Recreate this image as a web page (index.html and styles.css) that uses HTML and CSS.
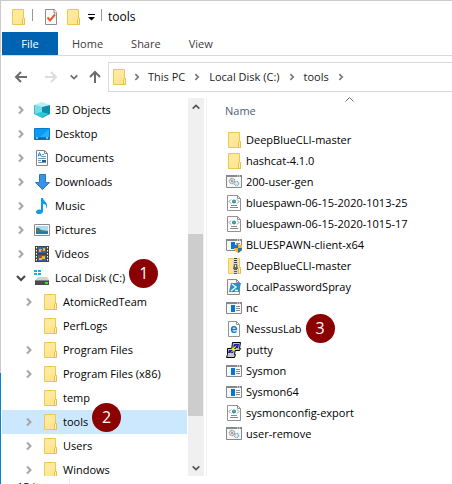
FILE: index.html
```html
<!DOCTYPE html>
<html lang="en">
<head>
<meta charset="utf-8">
<title>tools</title>
<link rel="stylesheet" href="styles.css">
</head>
<body>
<svg class="sprites" aria-hidden="true">
  <symbol id="folder" viewBox="0 0 16 16">
    <path d="M2.5.5h11v9h1v6h-12z" fill="#ffe693" stroke="#edc850"/>
    <path d="M3 1h10v5L3 12z" fill="#ffeba6" opacity=".6"/>
    <path d="M12.5 15.500v-5q0-1 1-1h1v6z" fill="#fff0b8" stroke="#e9c044"/>
  </symbol>
  <symbol id="properties" viewBox="0 0 16 16">
    <path d="M2.500.5h9l2 3v12h-11z" fill="#fafafa" stroke="#8d8d8d"/>
    <path d="M11 .5v3.500h3" fill="#fff" stroke="#8d8d8d"/>
    <path d="M4.500 8.500l2.500 3 5-6" fill="none" stroke="#ea5b25" stroke-width="2"/>
  </symbol>
  <symbol id="chevron" viewBox="0 0 12 12"><path d="M4 2.500L7.500 6 4 9.500" fill="none" stroke="currentColor" stroke-width="2"/></symbol>
  <symbol id="chevron-down" viewBox="0 0 12 12"><path d="M2 4l4 4 4-4" fill="none" stroke="currentColor" stroke-width="2"/></symbol>
  <symbol id="menu-down" viewBox="0 0 8 8"><path d="M1 1h7v1H1zM1 4h7L4.500 7.500z"/></symbol>
  <symbol id="arrow-left" viewBox="0 0 14 14"><path d="M13 7H2M7 2L2 7l5 5" fill="none" stroke="currentColor" stroke-width="2"/></symbol>
  <symbol id="arrow-up" viewBox="0 0 14 14"><path d="M7 13V2M2 7l5-5 5 5" fill="none" stroke="currentColor" stroke-width="2"/></symbol>
  <symbol id="cube" viewBox="0 0 16 16">
    <path d="M0 3l8-3 8 3-8 2z" fill="#b7eef5"/>
    <path d="M0 3l8 2v11l-8-4z" fill="#3cbccd"/>
    <path d="M16 3L8 5v11l8-4z" fill="#0c8ea8"/>
    <path d="M1 3l7 2v5l-7 2z" fill="#76dce6"/>
    <path d="M8 10l7 2-7 3-7-3z" fill="#29c8dc"/>
  </symbol>
  <symbol id="desktop" viewBox="0 0 16 16">
    <path d="M.5 2.500h15v11H.5z" fill="#0b9bf3" stroke="#087acb"/>
    <path d="M15 3v8L6 11z" fill="#27adff"/>
    <path d="M1 11.500h14V13H1z" fill="#0566ad"/><path d="M2 12h2m8 0h2" stroke="#fff"/>
  </symbol>
  <symbol id="document" viewBox="0 0 16 16">
    <path d="M2.500.5h8l3 3v12h-11z" fill="#fff" stroke="#858585"/>
    <path d="M10.500.5v3h3" fill="none" stroke="#858585"/>
    <path d="M4 6.500l1.500-4 2 4M4 5h3" fill="none" stroke="#2a86ca"/>
    <path d="M8 4.500h2M8 6.500h4M4 8.500h8M4 10.500h3M4 12.500h8" stroke="#6499c1"/>
    <path d="M8 10h4v2H8z" fill="#265c86"/>
  </symbol>
  <symbol id="download" viewBox="0 0 16 16"><path d="M5.500.5h6v8h4L8.500 15.500l-7-7h4z" fill="#3994e6" stroke="#2678c6"/></symbol>
  <symbol id="music" viewBox="0 0 16 16">
    <path d="M7 0h2c0 3 5 4 4 9-.5 1-1 2-1 1 1-3-1-4-3-4v7c0 4-7 4-7 1 0-2 3-3 5-2z" fill="#079cf3"/>
  </symbol>
  <symbol id="picture" viewBox="0 0 16 16">
    <path d="M.5 2.500h15v11H.5z" fill="#fff" stroke="#8b8b8b"/>
    <path d="M2 4h12v8H2z" fill="#a9dcf5"/>
    <path d="M2 6q3-1 5 2l7 1v3H2z" fill="#477d6a"/><path d="M2 10h12v2H2z" fill="#2778ad"/>
  </symbol>
  <symbol id="video" viewBox="0 0 16 16">
    <path d="M1 0h14v16H1z" fill="#444"/>
    <path d="M2.500 1v14M13.500 1v14" stroke="#fff" stroke-dasharray="1.500 1.500"/>
    <path d="M4 1h8v6H4zM4 9h8v6H4z" fill="#3467b0"/>
    <path d="M5 3h3v3H5zM9 2h2v3H9zM5 12h3v2H5zM8 10h3v3H8z" fill="#e8b735"/>
    <path d="M7 4h2v2H7zM6 10h2v2H6z" fill="#b7442f"/>
  </symbol>
  <symbol id="disk" viewBox="0 0 16 16">
    <path d="M0 0h3v2H0zM4 0h3v2H4zM0 3h3v2H0zM4 3h3v2H4z" fill="#0bb4ee"/>
    <path d="M4 7h9l2 3H1z" fill="#d2d2d2"/>
    <path d="M1 10h14v5H1z" fill="#4a4a4a"/><path d="M1 10.500h14" stroke="#858585"/>
    <path d="M11 12h3v2h-3z" fill="#31df4c"/>
  </symbol>
  <symbol id="script" viewBox="0 0 16 16">
    <path d="M.5 1.500h15v12H.5z" fill="#f7f7f7" stroke="#85898c"/><path d="M0 1h16v2H0z" fill="#85898c"/>
    <path d="M11 2h1m1 0h1" stroke="#fff"/>
    <circle cx="6" cy="7" r="2.500" fill="#eee" stroke="#9a9a9a" stroke-width="1.500" stroke-dasharray="1 .5"/><circle cx="6" cy="7" r="1" fill="#888"/>
    <circle cx="10.500" cy="9.500" r="2" fill="#eef8ff" stroke="#83acc7" stroke-width="1.500" stroke-dasharray="1 .5"/>
  </symbol>
  <symbol id="xml" viewBox="0 0 16 16">
    <path d="M1.500.5h10l3 3v12h-13z" fill="#fff" stroke="#929292"/><path d="M11.500.5v3h3" fill="none" stroke="#929292"/>
    <circle cx="8" cy="6.500" r="2" fill="#2389b4"/><path d="M7 5l2 1-1 2z" fill="#6ac36f"/>
    <path d="M5 4.500l-2 2 2 2M11 4.500l2 2-2 2" fill="none" stroke="#8796a3"/>
    <path d="M5 10.500h6M4 12.500h8" stroke="#888"/>
  </symbol>
  <symbol id="app" viewBox="0 0 16 16">
    <path d="M.5 2.500h15v11H.5z" fill="#f8f8f8" stroke="#85898c"/><path d="M0 2h16v2H0z" fill="#85898c"/>
    <path d="M11 3h1m1 0h1" stroke="#fff"/><path d="M5 5h4v7H5z" fill="#0078d7"/>
    <path d="M10 6.500h4M10 8.500h4M10 10.500h4" stroke="#85898c"/>
  </symbol>
  <symbol id="shield" viewBox="0 0 16 16">
    <path d="M8 8q3 0 4-1 1 1 4 1v3q0 3-4 5-4-2-4-5z" fill="#f5b52c"/>
    <path d="M12 7v4H8V8q3 0 4-1zM12 11h4q0 3-4 5z" fill="#2471b8"/>
  </symbol>
  <symbol id="zip" viewBox="0 0 16 16">
    <path d="M2.5.5h11v9h1v6h-12z" fill="#ffe693" stroke="#edc850"/>
    <path d="M12.500 15.500v-5q0-1 1-1h1v6z" fill="#fff0b8" stroke="#e9c044"/>
    <path d="M7 0h5v16H7z" fill="#d8d8d0"/><path d="M9.500 0v6" stroke="#444" stroke-width="3" stroke-dasharray="1 1"/>
    <path d="M8 6h3l1 5H7z" fill="#666"/><path d="M9 7h1v2H9z" fill="#eee"/><path d="M9.500 11v5" stroke="#555" stroke-width="3" stroke-dasharray="1 1"/>
  </symbol>
  <symbol id="powershell" viewBox="0 0 16 16">
    <path d="M1.500.5h9l3 3v12h-12z" fill="#f6f6f6" stroke="#8b8b8b"/><path d="M10.500.5v3h3" fill="none" stroke="#8b8b8b"/>
    <path d="M5 4h10l-2 9H3z" fill="#2392c9"/><path d="M6 5l4 3-5 4M9 11.500h3" fill="none" stroke="#e9f8ff" stroke-width="1.500"/>
  </symbol>
  <symbol id="web" viewBox="0 0 16 16">
    <path d="M2.500.5h8l3 3v12h-11z" fill="#fff" stroke="#929292"/><path d="M10.500.5v3h3" fill="none" stroke="#929292"/>
    <path d="M5.500 8.500h5c0-4-5-3.500-5 0 0 3 3 3.500 5 2" fill="none" stroke="#0b7ed4" stroke-width="1.500"/>
  </symbol>
  <symbol id="putty" viewBox="0 0 16 16">
    <path d="M6.500.5h8l-1 6h1l-1 2h-8z" fill="#bdbdbd" stroke="#000"/><path d="M8 2h5l-1 4H7z" fill="#1820b5"/>
    <path d="M1.500 6.500h8l-1 6h1l-1 3h-8l1-3z" fill="#c8c8c8" stroke="#000"/><path d="M3 8h5l-1 3H2z" fill="#1820b5"/>
    <path d="M11 3L5 7h3L4 11l7-4H8z" fill="#ff0"/>
  </symbol>
</svg>
<div class="window">
  <header class="titlebar">
    <svg class="icon"><use href="#folder"/></svg>
    <i class="divider"></i>
    <button class="tool first" aria-label="Properties"><svg class="icon"><use href="#properties"/></svg></button>
    <button class="tool" aria-label="New folder"><svg class="icon"><use href="#folder"/></svg></button>
    <button class="tool" aria-label="Customize"><svg class="small"><use href="#menu-down"/></svg></button>
    <i class="divider"></i>
    <h1>tools</h1>
  </header>
  <div class="tabs">
    <button class="tab file">File</button><button class="tab">Home</button><button class="tab">Share</button><button class="tab">View</button>
  </div>
  <div class="address">
    <div class="history">
      <button aria-label="Back"><svg class="arrow"><use href="#arrow-left"/></svg></button>
      <button class="off" aria-label="Forward" disabled><svg class="arrow forward"><use href="#arrow-left"/></svg></button>
      <button class="recent" aria-label="Recent locations"><svg class="tiny"><use href="#chevron-down"/></svg></button>
      <button aria-label="Up"><svg class="arrow"><use href="#arrow-up"/></svg></button>
    </div>
    <nav class="path" aria-label="Path">
      <svg class="icon"><use href="#folder"/></svg>
      <svg class="sep"><use href="#chevron"/></svg>
      <a href="#">This PC</a><svg class="sep"><use href="#chevron"/></svg>
      <a href="#">Local Disk (C:)</a><svg class="sep"><use href="#chevron"/></svg>
      <a href="#">tools</a><svg class="sep"><use href="#chevron"/></svg>
    </nav>
  </div>
  <div class="content">
    <nav class="tree" aria-label="Folders">
      <div class="row"><button class="twist" aria-label="Expand"><svg><use href="#chevron"/></svg></button><svg class="icon"><use href="#cube"/></svg><a href="#">3D Objects</a></div>
      <div class="row"><button class="twist" aria-label="Expand"><svg><use href="#chevron"/></svg></button><svg class="icon"><use href="#desktop"/></svg><a href="#">Desktop</a></div>
      <div class="row"><button class="twist" aria-label="Expand"><svg><use href="#chevron"/></svg></button><svg class="icon"><use href="#document"/></svg><a href="#">Documents</a></div>
      <div class="row"><button class="twist" aria-label="Expand"><svg><use href="#chevron"/></svg></button><svg class="icon"><use href="#download"/></svg><a href="#">Downloads</a></div>
      <div class="row"><button class="twist" aria-label="Expand"><svg><use href="#chevron"/></svg></button><svg class="icon"><use href="#music"/></svg><a href="#">Music</a></div>
      <div class="row"><button class="twist" aria-label="Expand"><svg><use href="#chevron"/></svg></button><svg class="icon"><use href="#picture"/></svg><a href="#">Pictures</a></div>
      <div class="row"><button class="twist" aria-label="Expand"><svg><use href="#chevron"/></svg></button><svg class="icon"><use href="#video"/></svg><a href="#">Videos</a></div>
      <div class="row"><button class="twist open" aria-label="Collapse"><svg><use href="#chevron-down"/></svg></button><svg class="icon"><use href="#disk"/></svg><a href="#">Local Disk (C:)</a><span class="anchor"><b class="badge">1</b></span></div>
      <div class="row child"><button class="twist" aria-label="Expand"><svg><use href="#chevron"/></svg></button><svg class="icon"><use href="#folder"/></svg><a href="#">AtomicRedTeam</a></div>
      <div class="row child"><i class="twist"></i><svg class="icon"><use href="#folder"/></svg><a href="#">PerfLogs</a></div>
      <div class="row child"><button class="twist" aria-label="Expand"><svg><use href="#chevron"/></svg></button><svg class="icon"><use href="#folder"/></svg><a href="#">Program Files</a></div>
      <div class="row child"><button class="twist" aria-label="Expand"><svg><use href="#chevron"/></svg></button><svg class="icon"><use href="#folder"/></svg><a href="#">Program Files (x86)</a></div>
      <div class="row child"><i class="twist"></i><svg class="icon"><use href="#folder"/></svg><a href="#">temp</a></div>
      <div class="row child selected"><button class="twist" aria-label="Expand"><svg><use href="#chevron"/></svg></button><svg class="icon"><use href="#folder"/></svg><a href="#">tools</a><span class="anchor"><b class="badge">2</b></span></div>
      <div class="row child"><button class="twist" aria-label="Expand"><svg><use href="#chevron"/></svg></button><svg class="icon"><use href="#folder"/></svg><a href="#">Users</a></div>
      <div class="row child"><button class="twist" aria-label="Expand"><svg><use href="#chevron"/></svg></button><svg class="icon"><use href="#folder"/></svg><a href="#">Windows</a></div>
    </nav>
    <div class="scroll">
      <button aria-label="Scroll up"><svg class="tiny flip"><use href="#chevron-down"/></svg></button>
      <div class="track"><div class="thumb"></div></div>
      <button aria-label="Scroll down"><svg class="tiny"><use href="#chevron-down"/></svg></button>
    </div>
    <main class="files">
      <table>
        <thead><tr><th scope="col"><span class="heading">Name<svg class="sort" viewBox="0 0 9 5"><path d="M.5 4.500l4-4 4 4" fill="none" stroke="#6d6d6d"/></svg></span></th></tr></thead>
        <tbody>
          <tr><td><a href="#"><svg class="icon"><use href="#folder"/></svg>DeepBlueCLI-master</a></td></tr>
          <tr><td><a href="#"><svg class="icon"><use href="#folder"/></svg>hashcat-4.1.0</a></td></tr>
          <tr><td><a href="#"><svg class="icon"><use href="#script"/></svg>200-user-gen</a></td></tr>
          <tr><td><a href="#"><svg class="icon"><use href="#xml"/></svg>bluespawn-06-15-2020-1013-25</a></td></tr>
          <tr><td><a href="#"><svg class="icon"><use href="#xml"/></svg>bluespawn-06-15-2020-1015-17</a></td></tr>
          <tr><td><a href="#"><svg class="icon"><use href="#app"/><use href="#shield"/></svg>BLUESPAWN-client-x64</a></td></tr>
          <tr><td><a href="#"><svg class="icon"><use href="#zip"/></svg>DeepBlueCLI-master</a></td></tr>
          <tr><td><a href="#"><svg class="icon"><use href="#powershell"/></svg>LocalPasswordSpray</a></td></tr>
          <tr><td><a href="#"><svg class="icon"><use href="#app"/></svg>nc</a></td></tr>
          <tr><td><a href="#"><svg class="icon"><use href="#web"/></svg>NessusLab<span class="anchor"><b class="badge level">3</b></span></a></td></tr>
          <tr><td><a href="#"><svg class="icon"><use href="#putty"/></svg>putty</a></td></tr>
          <tr><td><a href="#"><svg class="icon"><use href="#app"/></svg>Sysmon</a></td></tr>
          <tr><td><a href="#"><svg class="icon"><use href="#app"/></svg>Sysmon64</a></td></tr>
          <tr><td><a href="#"><svg class="icon"><use href="#xml"/></svg>sysmonconfig-export</a></td></tr>
          <tr><td><a href="#"><svg class="icon"><use href="#script"/></svg>user-remove</a></td></tr>
        </tbody>
      </table>
    </main>
  </div>
  <footer class="status"><span>15 items</span></footer>
</div>
</body>
</html>
```
FILE: styles.css
```css
* { box-sizing: border-box; }
body {
  margin: 0;
  height: 100vh;
  overflow: hidden;
  padding: 1px 0 0 1px;
  background: linear-gradient(#cbcbcb 0 77%, #0787cc 77%);
  font: 11px/16px "Open Sans", "Noto Sans", sans-serif;
  color: #000;
}
a { color: inherit; text-decoration: none; white-space: nowrap; }
button { font: inherit; color: inherit; border: 0; padding: 0; background: none; }
svg { display: block; flex: none; }
.sprites { position: absolute; width: 0; height: 0; }
.icon { width: 16px; height: 16px; }
.small { width: 8px; height: 8px; }
.tiny { width: 10px; height: 10px; }

.window {
  display: flex;
  flex-direction: column;
  height: 100%;
  padding-left: 1px;
  background: #fff;
}

.titlebar { display: flex; align-items: center; flex: none; height: 31px; padding-left: 8px; }
.titlebar h1 { margin: 0; font-size: 12px; font-weight: 400; }
.divider { width: 1px; height: 12px; margin: 0 6px 3px 6px; background: #999; }
.tool + .tool { margin-left: 6px; }
.tool.first { margin-left: 4px; }

.tabs { display: flex; flex: none; height: 24px; border-bottom: 1px solid #dadada; color: #3b3b3b; }
.tab { padding: 0 14px; }
.tab.file { width: 56px; background: #0063b1; color: #fff; }

.address { display: flex; align-items: center; flex: none; height: 41px; color: #222; }
.history { display: flex; align-items: center; flex: none; width: 106px; padding-left: 12px; color: #6c6c6c; }
.history button + button { margin-left: 16px; }
.history .recent { margin-left: 11px; }
.history .recent + button { margin-left: 9px; }
.history .off { color: #dcdcdc; }
.arrow { width: 14px; height: 14px; }
.forward { transform: scaleX(-1); }
.path {
  display: flex;
  align-items: center;
  flex: 1;
  height: 30px;
  padding-left: 2px;
  border: solid #d9d9d9;
  border-width: 1px 0 1px 1px;
}
.sep { width: 10px; height: 10px; margin: 0 7px; color: #777; }
.icon + .sep { margin: 0 6px 0 5px; }

.content { display: flex; flex: 1; min-height: 0; padding-top: 1px; }
.tree { width: 185px; flex: none; overflow: hidden; }
.row { display: flex; align-items: center; height: 24px; padding-left: 13px; }
.child { padding-left: 21px; }
.row .icon { margin: 0 5px 0 7px; }
.twist { width: 12px; height: 12px; flex: none; color: #a6a6a6; }
.twist svg { width: 12px; height: 12px; }
.open { color: #444; }
.selected { background: #cce8ff; }

.scroll { display: flex; flex-direction: column; flex: none; width: 16px; margin: 0 2px 0 1px; background: #f0f0f0; color: #555; }
.scroll button { display: grid; place-items: center; height: 17px; }
.flip { transform: scaleY(-1); }
.track { display: flex; flex-direction: column; justify-content: flex-end; flex: 1; padding-bottom: 43px; }
.thumb { height: 64%; max-height: 182px; flex: none; margin-right: 1px; background: #cdcdcd; }

.files { flex: 1; min-width: 0; border-left: 1px solid #f2f2f2; }
table { width: 100%; border-collapse: collapse; }
th { height: 31px; padding: 0 0 5px 18px; font-weight: 400; text-align: left; color: #4c607a; }
.heading { display: block; position: relative; }
.sort { position: absolute; left: 53%; top: -6px; width: 9px; height: 5px; }
td { height: 21px; padding: 0 0 0 19px; }
td a { display: flex; align-items: center; }
td .icon { margin-right: 4px; }

/* Numbered step markers shown beside the item they refer to */
.anchor { position: relative; width: 0; height: 16px; margin-left: 4px; }
.badge {
  position: absolute;
  left: 0;
  top: -11px;
  width: 29px;
  height: 29px;
  border-radius: 50%;
  background: #8b0000;
  color: #fff;
  font: 16px/29px "Open Sans", sans-serif;
  text-align: center;
}
.badge.level { top: -7px; }
.status { display: flex; flex: none; height: 8px; overflow: hidden; padding: 3px 0 0 15px; }
.status span { padding-right: 8px; border-right: 1px solid #ececec; height: 16px; }
```
